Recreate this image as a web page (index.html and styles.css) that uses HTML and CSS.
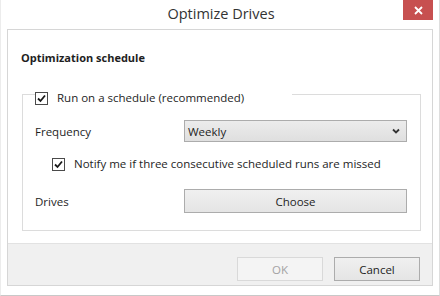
FILE: index.html
```html
<!DOCTYPE html>
<html lang="en">
<head>
    <meta charset="UTF-8">
    <title>Optimize Drives</title>
    <link rel="stylesheet" href="styles.css">
</head>
<body>
    <div class="window">
        <div class="titlebar">
            <div class="title">Optimize Drives</div>
            <div class="close">
                <svg width="9" height="9" viewBox="0 0 9 9"><path d="M1 1 L8 8 M8 1 L1 8" stroke="#fff" stroke-width="1.8"/></svg>
            </div>
        </div>

        <div class="panel">
            <div class="content">
                <div class="heading">Optimization schedule</div>

                <fieldset class="group">
                    <legend class="group-legend">
                        <label class="check">
                            <span class="box"><svg width="11" height="11" viewBox="0 0 11 11"><path d="M2 5.5 L4.5 8 L9 2.5" fill="none" stroke="#1a1a1a" stroke-width="1.8"/></svg></span>
                            Run on a schedule (recommended)
                        </label>
                    </legend>

                    <div class="row row-freq">
                        <span class="label">Frequency</span>
                        <div class="select">
                            <span>Weekly</span>
                            <svg width="8" height="6" viewBox="0 0 8 6"><path d="M1 1.5 L4 4.5 L7 1.5" fill="none" stroke="#333" stroke-width="1.8"/></svg>
                        </div>
                    </div>

                    <div class="row-notify">
                        <label class="check">
                            <span class="box"><svg width="11" height="11" viewBox="0 0 11 11"><path d="M2 5.5 L4.5 8 L9 2.5" fill="none" stroke="#1a1a1a" stroke-width="1.8"/></svg></span>
                            Notify me if three consecutive scheduled runs are missed
                        </label>
                    </div>

                    <div class="row row-drives">
                        <span class="label">Drives</span>
                        <button class="btn btn-wide">Choose</button>
                    </div>
                </fieldset>
            </div>

            <div class="footer">
                <button class="btn btn-disabled">OK</button>
                <button class="btn">Cancel</button>
            </div>
        </div>
    </div>
</body>
</html>
```

FILE: styles.css
```css
/* Windows 8 style dialog */
body {
    margin: 0;
    background-color: #fff;
    font-family: 'Segoe UI', 'Open Sans', sans-serif;
    font-size: 11.5px;
    color: #1e1e1e;
}
.window {
    width: 438px;
    height: 295px;
    border-left: 1px solid #ececec;
    border-right: 1px solid #dedede;
    border-bottom: 1px solid #c8c8c8;
    display: flex;
    flex-direction: column;
}
.titlebar {
    height: 29px;
    display: flex;
    align-items: flex-start;
}
.title {
    flex: 1;
    padding-left: 38px;
    text-align: center;
    font-size: 14.5px;
    line-height: 27px;
    color: #333;
}
.close {
    width: 30px;
    height: 20px;
    margin-right: 6px;
    background-color: #c75050;
    display: flex;
    justify-content: center;
    align-items: center;
}
.panel {
    margin-left: 6px;
    margin-right: 6px;
    border: 1px solid #d6d6d6;
    display: flex;
    flex-direction: column;
}
.content {
    padding: 20px 11px 12px 14px;
    background-color: #fff;
}
.heading {
    font-weight: bold;
    font-size: 11px;
    line-height: 16px;
    margin-left: -1px;
}
.group {
    margin: 16px 0 0 0;
    padding: 14px 11px 17px 12px;
    border: 1px solid #dcdcdc;
    min-width: 0;
}
.group-legend {
    padding: 8px 0 0 0;
    width: 257px;
    line-height: 16px;
}
.check {
    display: flex;
    align-items: center;
    line-height: 16px;
}
.box {
    width: 11px;
    height: 11px;
    border: 1px solid #4a4a4a;
    background-color: #fff;
    margin-right: 9px;
    display: flex;
}
.row {
    display: flex;
    align-items: center;
}
.label {
    width: 149px;
}
.select {
    height: 20px;
    width: 212px;
    border: 1px solid #acacac;
    background: linear-gradient(#ececec, #dfdfdf);
    display: flex;
    align-items: center;
    justify-content: space-between;
    padding: 0 6px 0 3px;
}
.row-notify {
    margin-top: 14px;
    padding-left: 17px;
}
.row-drives {
    margin-top: 17px;
}
.btn {
    font-family: inherit;
    font-size: 11.5px;
    color: #1e1e1e;
    height: 24px;
    width: 86px;
    border: 1px solid #acacac;
    background: linear-gradient(#f0f0f0, #e5e5e5);
    padding: 0;
}
.btn-wide {
    width: 223px;
}
.btn-disabled {
    color: #a3a3a3;
    border-color: #d9d9d9;
    background: #f4f4f4;
}
.footer {
    height: 42px;
    background-color: #f0f0f0;
    border-top: 1px solid #e2e2e2;
    display: flex;
    justify-content: flex-end;
    align-items: flex-start;
    gap: 11px;
    padding: 13px 12px 0 0;
    box-sizing: border-box;
}
```
